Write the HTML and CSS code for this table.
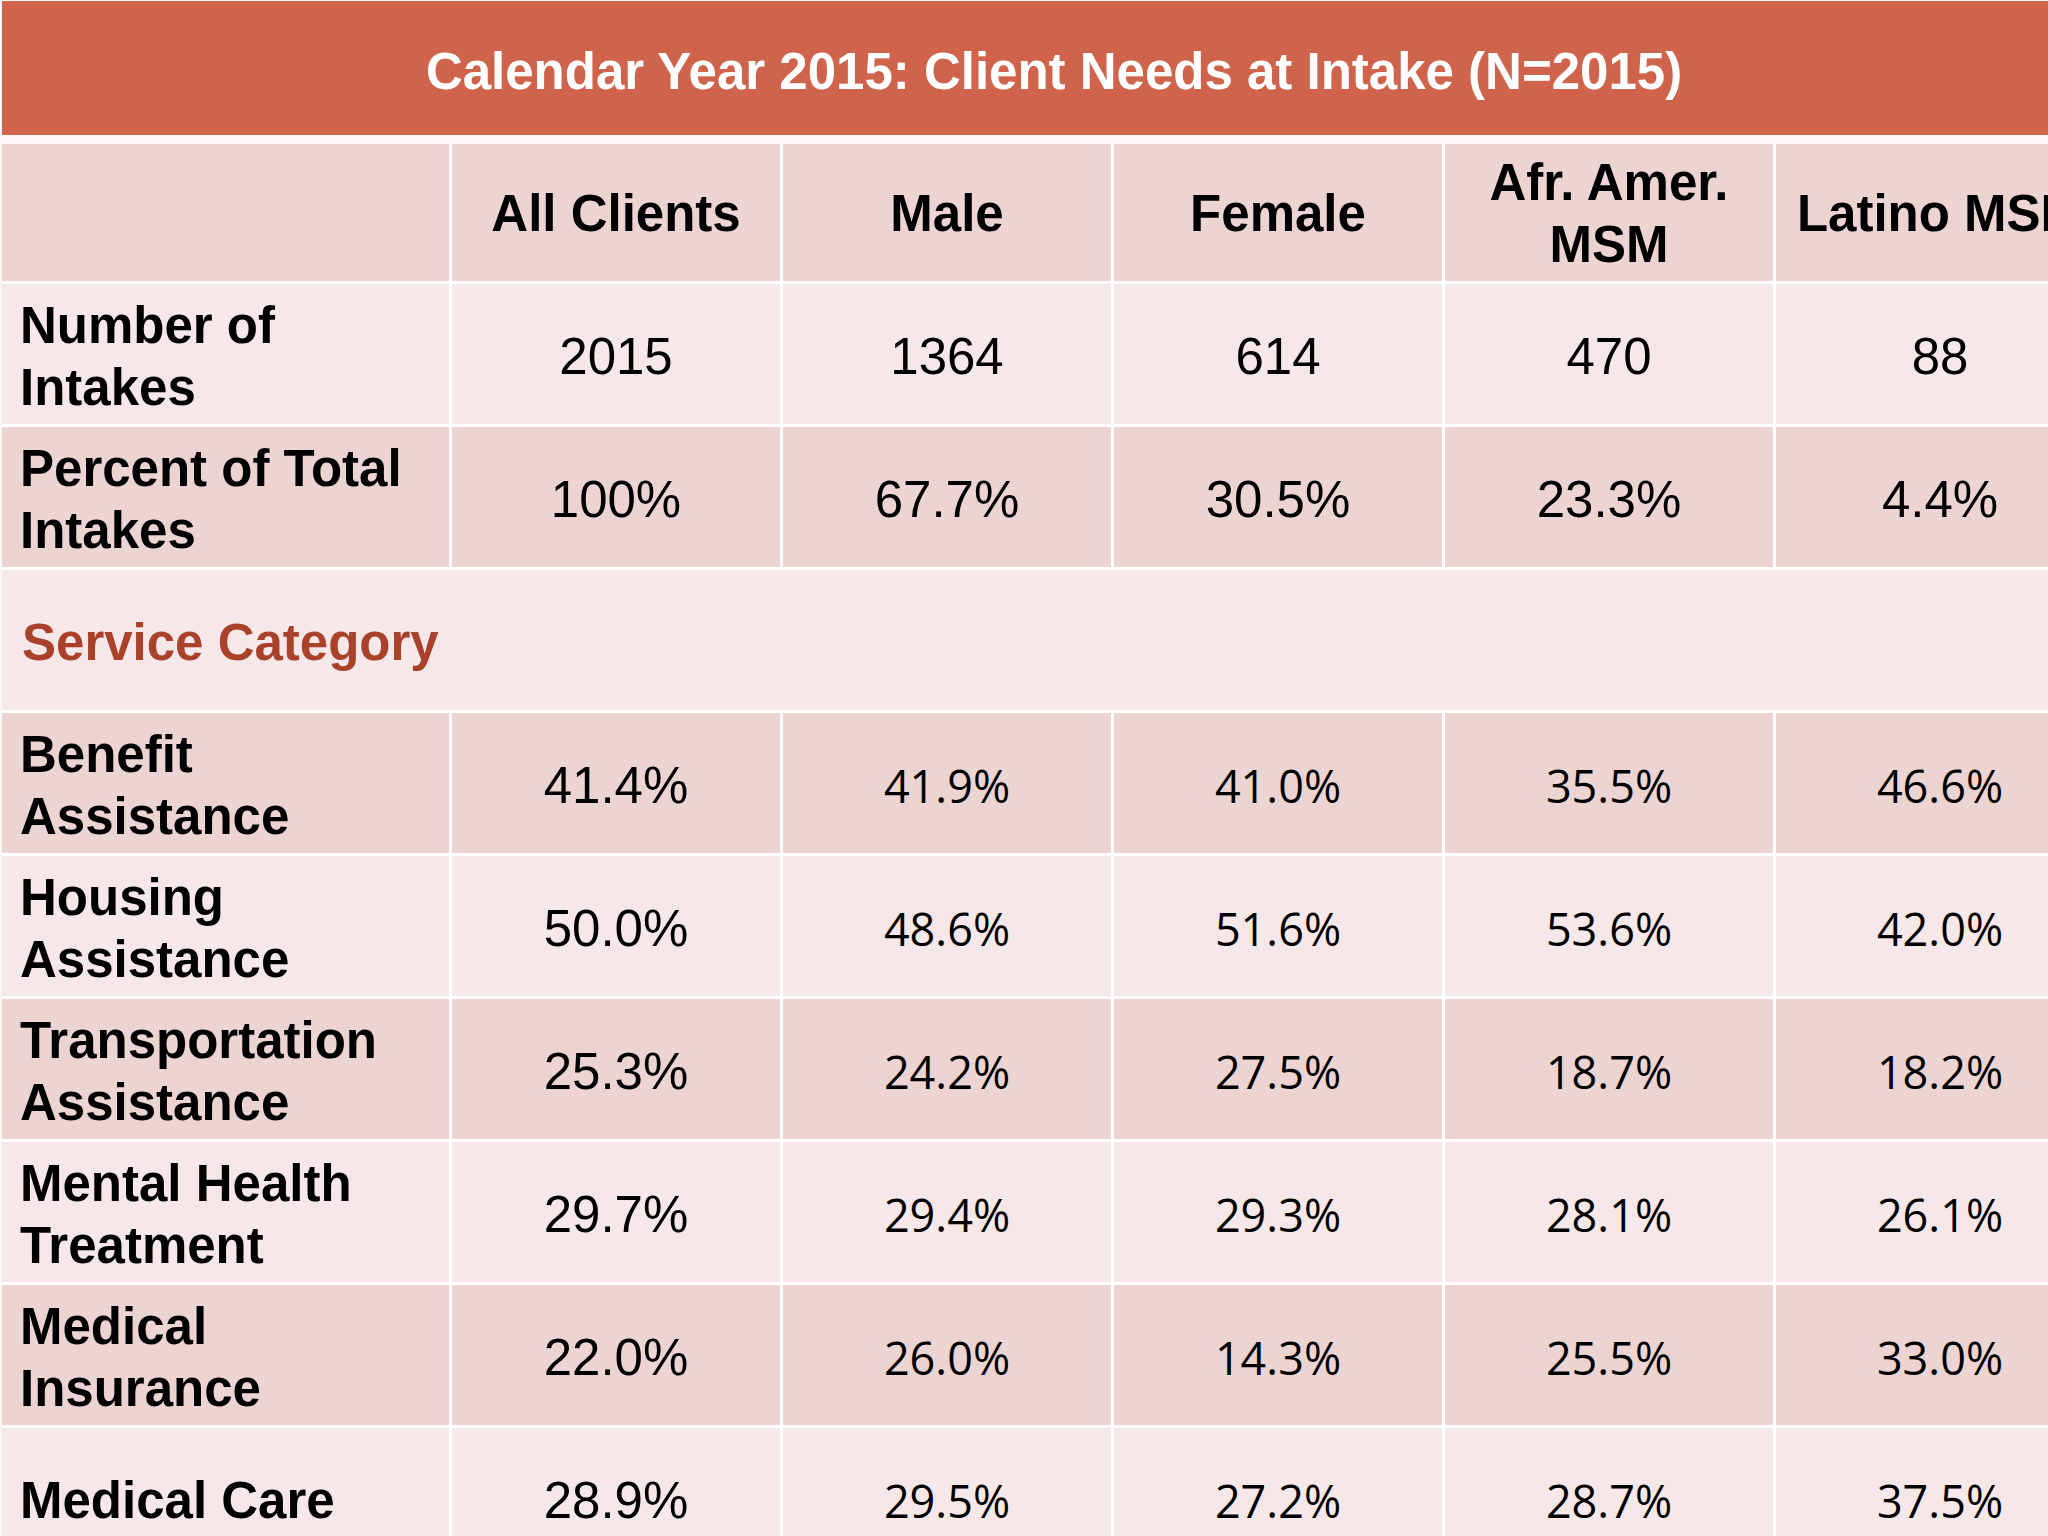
FILE: index.html
```html
<!DOCTYPE html>
<html lang="en">
<head>
<meta charset="utf-8">
<title>Calendar Year 2015: Client Needs at Intake</title>
<link rel="stylesheet" href="styles.css">
</head>
<body>
<div class="slide">
  <div class="title-bar"><h1 class="title">Calendar Year 2015: Client Needs at Intake (N=2015)</h1></div>
  <div class="grid">
    <div class="cell head"></div>
    <div class="cell head">All Clients</div>
    <div class="cell head">Male</div>
    <div class="cell head">Female</div>
    <div class="cell head">Afr. Amer.<br>MSM</div>
    <div class="cell head">Latino MSM</div>

    <div class="cell label light">Number of<br>Intakes</div>
    <div class="cell val light">2015</div>
    <div class="cell val light">1364</div>
    <div class="cell val light">614</div>
    <div class="cell val light">470</div>
    <div class="cell val light">88</div>

    <div class="cell label dark">Percent of Total<br>Intakes</div>
    <div class="cell val dark">100%</div>
    <div class="cell val dark">67.7%</div>
    <div class="cell val dark">30.5%</div>
    <div class="cell val dark">23.3%</div>
    <div class="cell val dark">4.4%</div>

    <div class="cell section light">Service Category</div>

    <div class="cell label dark">Benefit<br>Assistance</div>
    <div class="cell val dark">41.4%</div>
    <div class="cell val alt dark">41.9%</div>
    <div class="cell val alt dark">41.0%</div>
    <div class="cell val alt dark">35.5%</div>
    <div class="cell val alt dark">46.6%</div>

    <div class="cell label light">Housing<br>Assistance</div>
    <div class="cell val light">50.0%</div>
    <div class="cell val alt light">48.6%</div>
    <div class="cell val alt light">51.6%</div>
    <div class="cell val alt light">53.6%</div>
    <div class="cell val alt light">42.0%</div>

    <div class="cell label dark">Transportation<br>Assistance</div>
    <div class="cell val dark">25.3%</div>
    <div class="cell val alt dark">24.2%</div>
    <div class="cell val alt dark">27.5%</div>
    <div class="cell val alt dark">18.7%</div>
    <div class="cell val alt dark">18.2%</div>

    <div class="cell label light">Mental Health<br>Treatment</div>
    <div class="cell val light">29.7%</div>
    <div class="cell val alt light">29.4%</div>
    <div class="cell val alt light">29.3%</div>
    <div class="cell val alt light">28.1%</div>
    <div class="cell val alt light">26.1%</div>

    <div class="cell label dark">Medical<br>Insurance</div>
    <div class="cell val dark">22.0%</div>
    <div class="cell val alt dark">26.0%</div>
    <div class="cell val alt dark">14.3%</div>
    <div class="cell val alt dark">25.5%</div>
    <div class="cell val alt dark">33.0%</div>

    <div class="cell label light">Medical Care</div>
    <div class="cell val light">28.9%</div>
    <div class="cell val alt light">29.5%</div>
    <div class="cell val alt light">27.2%</div>
    <div class="cell val alt light">28.7%</div>
    <div class="cell val alt light">37.5%</div>
  </div>
</div>
</body>
</html>
```
FILE: styles.css
```css
html, body {
  margin: 0;
  padding: 0;
  background: #ffffff;
  overflow: hidden;
}
body {
  font-family: "Liberation Sans", Arial, sans-serif;
  color: #000000;
}
.slide {
  width: 2104px;
  padding: 1px 0 0 2px;
  background: #fbf7f6;
}
.title-bar {
  height: 134px;
  background: #d0634b;
  display: flex;
  align-items: center;
  justify-content: center;
  padding-top: 8px;
  box-sizing: border-box;
}
.title {
  margin: 0;
  font-size: 51px;
  font-weight: bold;
  color: #ffffff;
  line-height: 60px;
  white-space: nowrap;
}
.grid {
  margin-top: 9px;
  display: grid;
  grid-template-columns: 447px repeat(5, 328px);
  grid-template-rows: 137px repeat(9, 140px);
  gap: 3px;
  background: #ffffff;
}
.cell {
  display: flex;
  align-items: center;
  font-size: 51px;
  line-height: 62px;
  padding-top: 5px;
  box-sizing: border-box;
}
.head {
  background: #ecd4d2;
  font-weight: bold;
  justify-content: center;
  text-align: center;
  padding-top: 2px;
}
.light { background: #f6e8e8; }
.dark { background: #ecd4d2; }
.label {
  font-weight: bold;
  padding-left: 18px;
}
.val {
  justify-content: center;
}
.alt {
  font-family: "Open Sans", "Noto Sans", sans-serif;
  font-size: 45px;
}
.section {
  grid-column: 1 / -1;
  color: #a9412b;
  font-weight: bold;
  padding-left: 20px;
}
```
